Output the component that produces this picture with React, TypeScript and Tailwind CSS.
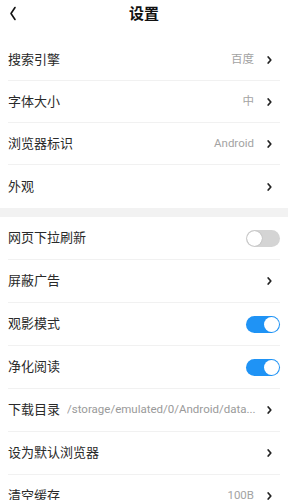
import React, { useState } from 'react';

const font = { fontFamily: 'Roboto, "Noto Sans CJK SC", sans-serif' };

const Chevron = () => (
  <svg width="5" height="8" viewBox="0 0 5 8" className="shrink-0 block">
    <path d="M1.2 1 L3.8 4 L1.2 7" fill="none" stroke="#222" strokeWidth="1.7" strokeLinecap="round" strokeLinejoin="round" />
  </svg>
);

const Toggle = ({ on, onClick }: { on: boolean; onClick: () => void }) => (
  <button
    onClick={onClick}
    className={`relative w-[34px] h-[17px] rounded-full shrink-0 ${on ? 'bg-[#1f93f5]' : 'bg-[#d4d4d4]'}`}
  >
    <span
      className={`absolute top-[1px] w-[15px] h-[15px] rounded-full bg-white ${on ? 'right-[1px]' : 'left-[1px] shadow-[0_0_1px_rgba(0,0,0,0.4)]'}`}
    />
  </button>
);

interface RowProps {
  label: string;
  value?: string;
  path?: string;
  toggle?: boolean;
  onToggle?: () => void;
  last?: boolean;
  tall?: boolean;
}

const Row: React.FC<RowProps> = ({ label, value, path, toggle, onToggle, last, tall }) => (
  <div
    className={`${tall ? 'h-[43px]' : 'h-[42px]'} mx-2 flex items-center ${last ? '' : 'border-b border-[#f1f1f1]'}`}
  >
    <span className="text-[13px] text-[#2a2a2a] shrink-0">{label}</span>
    {path && (
      <span className="ml-[7px] text-[11.5px] text-[#9a9a9a] whitespace-nowrap overflow-hidden flex-1 min-w-0">
        {path}
      </span>
    )}
    {!path && <div className="flex-1" />}
    {value && <span className="text-[11.5px] text-[#a3a3a3] mr-[13px]">{value}</span>}
    {toggle !== undefined ? (
      <Toggle on={toggle} onClick={onToggle ?? (() => {})} />
    ) : (
      <span className={`pr-[8px] ${path ? 'pl-[10px]' : ''}`}>
        <Chevron />
      </span>
    )}
  </div>
);

const App: React.FC = () => {
  const [pull, setPull] = useState(false);
  const [movie, setMovie] = useState(true);
  const [clean, setClean] = useState(true);

  return (
    <div className="w-[288px] bg-white" style={font}>
      {/* Header */}
      <div className="relative h-[28px] flex items-center justify-center">
        <button className="absolute left-[9px] top-[6px]">
          <svg width="8" height="15" viewBox="0 0 8 15" className="block">
            <path d="M6 1.5 L2 7.5 L6 13.5" fill="none" stroke="#111" strokeWidth="1.6" strokeLinecap="round" strokeLinejoin="round" />
          </svg>
        </button>
        <h1 className="text-[15px] font-bold text-[#111] mt-[1px]">设置</h1>
      </div>

      {/* Section 1 */}
      <div className="mt-[11px]">
        <Row label="搜索引擎" value="百度" />
        <Row label="字体大小" value="中" />
        <Row label="浏览器标识" value="Android" />
        <Row label="外观" last tall />
      </div>

      <div className="h-[9px] bg-[#f2f2f2]" />

      {/* Section 2 */}
      <div>
        <Row label="网页下拉刷新" tall toggle={pull} onToggle={() => setPull(!pull)} />
        <Row label="屏蔽广告" tall />
        <Row label="观影模式" tall toggle={movie} onToggle={() => setMovie(!movie)} />
        <Row label="净化阅读" tall toggle={clean} onToggle={() => setClean(!clean)} />
        <Row label="下载目录" tall path="/storage/emulated/0/Android/data..." />
        <Row label="设为默认浏览器" tall />
        <Row label="清空缓存" tall value="100B" />
      </div>
    </div>
  );
};

export default App;
